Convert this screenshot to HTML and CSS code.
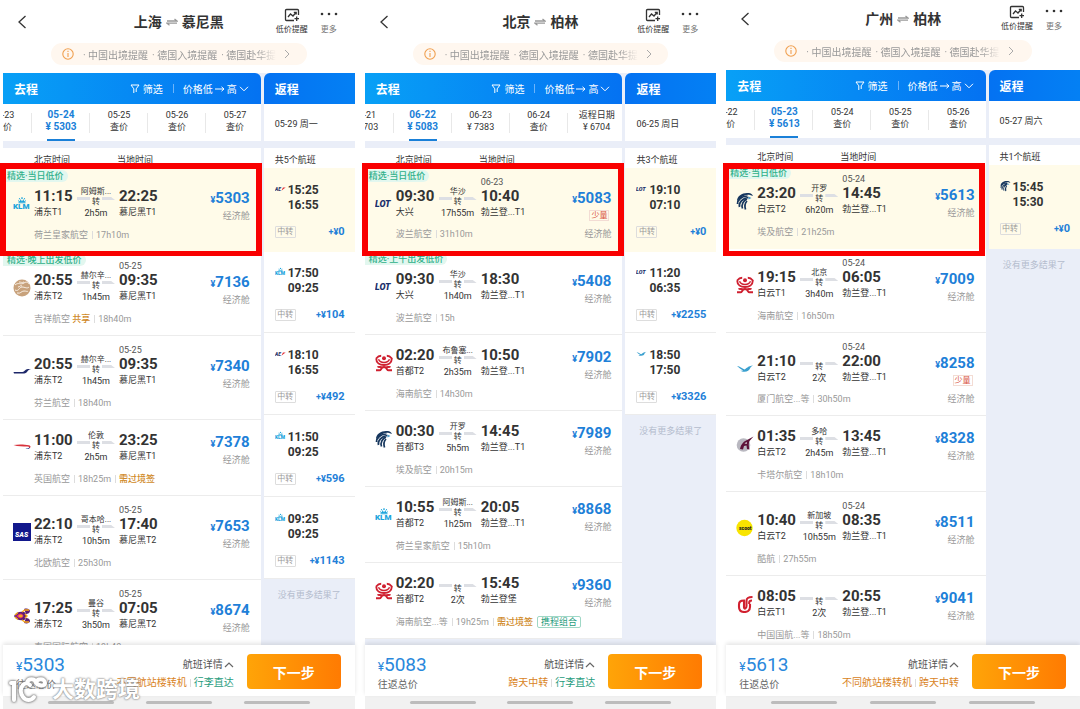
FILE: index.html
```html
<!DOCTYPE html>
<html lang="zh-CN">
<head>
	<title>航班列表</title>
	<meta charset="utf-8">
	<meta name="viewport" content="width=device-width, initial-scale=1">
	<link rel="stylesheet" href="styles.css">
</head>
<body>
<!-- shared icons and airline logos -->
<svg class="defs" aria-hidden="true">
	<symbol id="i-back" viewBox="0 0 10 14"><path d="M8.500 1 2 7l6.500 6" fill="none" stroke="#333" stroke-width="1.300"/></symbol>
	<symbol id="i-swap" viewBox="0 0 12 8"><path d="M1 3h10L8.500 1M11 5.200H1l2.500 2" fill="none" stroke="#999" stroke-width="1.300"/></symbol>
	<symbol id="i-alert" viewBox="0 0 16 14"><path d="M14.500 7V2.500a1 1 0 0 0-1-1h-11a1 1 0 0 0-1 1v9a1 1 0 0 0 1 1H10" fill="none" stroke="#333" stroke-width="1.300"/><path d="m4 9 2.500-3 2.500 2 3-3.500M9.800 4.300h2.400V6.500M12.700 8.500v4.500M10.500 10.700h4.500" fill="none" stroke="#333" stroke-width="1.300"/></symbol>
	<symbol id="i-dots" viewBox="0 0 18 4"><g fill="#333"><circle cx="2" cy="2" r="1.300"/><circle cx="9" cy="2" r="1.300"/><circle cx="16" cy="2" r="1.300"/></g></symbol>
	<symbol id="i-info" viewBox="0 0 12 12"><circle cx="6" cy="6" r="5.200" fill="none" stroke="#f0a050" stroke-width="1.100"/><path d="M6 5v4M6 2.800v1.200" stroke="#f0a050" stroke-width="1.100"/></symbol>
	<symbol id="i-right" viewBox="0 0 6 10"><path d="m1 1 4 4-4 4" fill="none" stroke="#aaa"/></symbol>
	<symbol id="i-filter" viewBox="0 0 10 10"><path d="M1 1h8L6.200 4.800V8M3.800 4.800V9M1 1l2.800 3.800" fill="none" stroke="#fff"/></symbol>
	<symbol id="i-arrow" viewBox="0 0 10 6"><path d="M0 3h9M6.500.8 9 3 6.500 5.200" fill="none" stroke="#fff"/></symbol>
	<symbol id="i-down" viewBox="0 0 10 6"><path d="m1 .8 4 4 4-4" fill="none" stroke="#fff"/></symbol>
	<symbol id="i-up" viewBox="0 0 10 6"><path d="m1 5 4-4 4 4" fill="none" stroke="#666" stroke-width="1.200"/></symbol>

	<symbol id="crown" viewBox="0 0 18 18"><g fill="#1ba4dc"><path d="M5.500 7.300h7v1h-7zM5 4.600l1.800 2 .8-2.600L9 6.400 10.400 4l.8 2.600 1.800-2-.8 2.400H5.800z"/><circle cx="9" cy="3.100" r=".9"/><circle cx="6.500" cy="3.700" r=".6"/><circle cx="11.500" cy="3.700" r=".6"/></g></symbol>
	<symbol id="juneyao" viewBox="0 0 18 18"><circle cx="9" cy="9" r="8.500" fill="#c8a27c"/><path d="M2 6c3-3 6 0 9-2s4 0 5 1M2 11c4 2 4-3 7-3s5 2 7 0M4 14c4 1 4-2 7-2s3 1 4 0M6 3c2 0 3 1 5 0M5 8c2 0 2-2 4-1" fill="none" stroke="#f8efe4" stroke-width="1"/></symbol>
	<symbol id="finnair" viewBox="0 2 18 18"><path d="M.5 11h9c2 0 2.500-3 5.500-3h3c-2.500.5-3 1.900-4 2.900-1 1-2.500 1.500-4 1.500H1z" fill="#1d2769"/></symbol>
	<symbol id="ba" viewBox="0 2 18 18"><path d="M.5 8c5-1 11-.7 15.500.2 2 .5 2.200 2.800-.5 3.300 1-1 .5-1.700-1-1.900C10 9.200 5 9.700.5 8z" fill="#d8323c"/><path d="M12.500 11.500c1.500.2 3.500-.2 4-1.500.9 1.800-2 2.700-4 1.500z" fill="#2b4a9a"/></symbol>
	<symbol id="thai" viewBox="0 0 18 18"><path d="M1 9c2-4 6-5 10-4 3 1 3 7 0 8-4 1-8 0-10-4z" fill="#5c1c74"/><path d="M11 2c3-1 6 0 6 2s-2 3-4 3zM11 16c3 1 6 0 6-2s-2-3-4-3z" fill="#5c1c74"/><path d="M3 9c2-2 4-3 6-2s2 3 0 4-4 0-6-2z" fill="#d6237a"/><path d="M6 9c1-1 3-1 3 0s-2 1-3 0zM9 5l3-2 4 0M9 13l3 2 4 0M12 7l2 2-2 2M2 8l3-2.500M2 10l3 2.500" fill="none" stroke="#f5a81c" stroke-width="1.400"/></symbol>
	<symbol id="hainan" viewBox="0 0 18 18"><g fill="none" stroke="#cf2030"><path d="M1.200 4.500c0 4.500 3.800 6.500 7.800 6.500s7.800-2 7.800-6.500c-1.500-2-3.800-2.800-5-2.800M1.200 4.500c1.500-2 3.800-2.800 5-2.800" stroke-width="1.900"/><path d="M3.500 5.300c1 2.500 3 3.200 5.500 3.200s4.500-.7 5.500-3.200" stroke-width="1.500"/><path d="M1 16.300h3.500c2 0 1.500-3.300 4.500-3.300s2.500 3.300 4.500 3.300H17M2.500 13.200c1.500-1.200 3 .8 6.500-.2 3.500 1 5-1 6.500.2" stroke-width="1.900"/></g><circle cx="9" cy="4.300" r="2" fill="#cf2030"/></symbol>
	<symbol id="egypt" viewBox="0 0 18 18"><path d="M1 9C1 4 6 1 11 1c3 0 5 .5 6 3l-3-1c-3-1-7 1-9 3z" fill="#17375e"/><g fill="none" stroke="#17375e" stroke-width="1.700"><path d="M1.500 12c0-4 4-8 10-8M3.500 15c-1-4 3-9 9-9.500M6.500 16.500c-1.500-4 1-8 4.500-9.500M9.500 17.500c-1.200-4-.5-6.500 1.500-8.500"/></g><path d="M12.500 4.500l3 1.500-3 1.500z" fill="#4a9ac8"/></symbol>
	<symbol id="xiamen" viewBox="0 1 18 18"><path d="M1 7c3 .5 5 2 7.500 3.500C11 9 12 7 17 6.500c-2 1-2.500 2-3 3-.8 1.800-2.500 3.300-5.500 3.300-2 0-3-.3-4.500-1.300 1.500.3 2.500.2 3 0C5 10 3 9 1 7z" fill="#3aa0cf"/></symbol>
	<symbol id="qatar" viewBox="0 0 18 18"><circle cx="7.500" cy="10" r="6.800" fill="#b9b8c0"/><path d="M4 14c1-5 4-8 8-9.500L17.500 1.500l-4 4.500c-1 2-1 5 0 8.500l-2.500-.5-.5-3.500-2.500.5-1 3.500z" fill="#5c1238"/><path d="M8.500 8.500l2-1.500.5 1.800z" fill="#eee"/></symbol>
	<symbol id="airchina" viewBox="0 0 18 18"><path d="M16.500 2C12 2 10.500 3 10.500 6v5c0 3-2.500 3.500-2.500 1V5.500C4 5.500 3 7 3 9.500V12c0 4 3 5 5.500 5s5.500-1 5.500-5V9M16 5.500c-2 0-2.800.5-2.800 2v1.500" fill="none" stroke="#d1202f" stroke-width="2.100"/></symbol>
</svg>

<section class="phone">
	<header class="top">
		<button class="back" aria-label="返回"><svg><use href="#i-back"/></svg></button>
		<h1>上海<svg><use href="#i-swap"/></svg>慕尼黑</h1>
		<div class="tools">
			<button class="remind"><svg><use href="#i-alert"/></svg>低价提醒</button>
			<button class="more"><svg><use href="#i-dots"/></svg>更多</button>
		</div>
	</header>
	<a class="notice" href="#"><svg class="info"><use href="#i-info"/></svg><span class="links"><span>· 中国出境提醒</span><span>· 德国入境提醒</span><span>· 德国赴华提</span></span><svg class="go"><use href="#i-right"/></svg></a>
	<main class="panels">
		<section class="out">
			<div class="bar"><h2>去程</h2><button class="filter"><svg><use href="#i-filter"/></svg>筛选</button><button class="sort">价格低<svg class="to"><use href="#i-arrow"/></svg>高<svg class="dn"><use href="#i-down"/></svg></button></div>
			<nav class="dates">
				<button>05-23<br>查价</button>
				<button class="on">05-24<br>¥ 5303</button>
				<button>05-25<br>查价</button>
				<button>05-26<br>查价</button>
				<button>05-27<br>查价</button>
			</nav>
			<div class="zones"><span>北京时间</span><span>当地时间</span></div>
			<article class="row tagged sel">
				<span class="tag">精选·当日低价</span>
				<div class="leg">
					<svg class="logo klm" viewBox="0 0 18 18"><use href="#crown"/><text x="0" y="14">KLM</text></svg>
					<div class="dep"><b>11:15</b><span>浦东T1</span></div>
					<div class="via"><span>阿姆斯...</span><i>转</i><em>2h5m</em></div>
					<div class="arr"><b>22:25</b><span>慕尼黑T1</span></div>
					<div class="price"><b><small>¥</small>5303</b><span>经济舱</span></div>
				</div>
				<p class="meta"><span>荷兰皇家航空</span><span>17h10m</span></p>
			</article>
			<article class="row dated">
				<span class="tag">精选·晚上出发低价</span>
				<div class="leg">
					<svg class="logo"><use href="#juneyao"/></svg>
					<div class="dep"><b>20:55</b><span>浦东T2</span></div>
					<div class="via"><span>赫尔辛...</span><i>转</i><em>1h45m</em></div>
					<div class="arr"><time>05-25</time><b>09:35</b><span>慕尼黑T1</span></div>
					<div class="price"><b><small>¥</small>7136</b><span>经济舱</span></div>
				</div>
				<p class="meta"><span>吉祥航空 <strong>共享</strong></span><span>18h40m</span></p>
			</article>
			<article class="row dated">
				<div class="leg">
					<svg class="logo"><use href="#finnair"/></svg>
					<div class="dep"><b>20:55</b><span>浦东T2</span></div>
					<div class="via"><span>赫尔辛...</span><i>转</i><em>1h45m</em></div>
					<div class="arr"><time>05-25</time><b>09:35</b><span>慕尼黑T1</span></div>
					<div class="price"><b><small>¥</small>7340</b><span>经济舱</span></div>
				</div>
				<p class="meta"><span>芬兰航空</span><span>18h40m</span></p>
			</article>
			<article class="row">
				<div class="leg">
					<svg class="logo"><use href="#ba"/></svg>
					<div class="dep"><b>11:00</b><span>浦东T2</span></div>
					<div class="via"><span>伦敦</span><i>转</i><em>2h5m</em></div>
					<div class="arr"><b>23:25</b><span>慕尼黑T1</span></div>
					<div class="price"><b><small>¥</small>7378</b><span>经济舱</span></div>
				</div>
				<p class="meta"><span>英国航空</span><span>18h25m</span><strong>需过境签</strong></p>
			</article>
			<article class="row dated">
				<div class="leg">
					<svg class="logo sas" viewBox="0 0 18 18"><path d="M0 0h18v18H0z"/><text x="2" y="14">SAS</text></svg>
					<div class="dep"><b>22:10</b><span>浦东T2</span></div>
					<div class="via"><span>哥本哈...</span><i>转</i><em>10h5m</em></div>
					<div class="arr"><time>05-25</time><b>17:40</b><span>慕尼黑T2</span></div>
					<div class="price"><b><small>¥</small>7653</b><span>经济舱</span></div>
				</div>
				<p class="meta"><span>北欧航空</span><span>25h30m</span></p>
			</article>
			<article class="row dated">
				<div class="leg">
					<svg class="logo"><use href="#thai"/></svg>
					<div class="dep"><b>17:25</b><span>浦东T2</span></div>
					<div class="via"><span>曼谷</span><i>转</i><em>3h50m</em></div>
					<div class="arr"><time>05-25</time><b>07:05</b><span>慕尼黑T2</span></div>
					<div class="price"><b><small>¥</small>8674</b><span>经济舱</span></div>
				</div>
				<p class="meta"><span>泰国国际航空</span><span>19h40m</span></p>
			</article>
		</section>
		<section class="ret">
			<div class="bar"><h2>返程</h2></div>
			<div class="day">05-29 周一</div>
			<div class="count">共5个航班</div>
			<div class="back-row sel"><svg class="af" viewBox="0 0 18 18"><text x="0" y="12">AE</text><path d="m10.500 12 2.500-5.500h4.500L14 9z"/></svg><p>15:25<br>16:55</p><span class="stop">中转</span><b class="add"><small>+¥</small>0</b></div>
			<div class="back-row"><svg class="klm" viewBox="0 0 18 18"><use href="#crown"/><text x="0" y="14">KLM</text></svg><p>17:50<br>09:25</p><span class="stop">中转</span><b class="add"><small>+¥</small>104</b></div>
			<div class="back-row"><svg class="af" viewBox="0 0 18 18"><text x="0" y="12">AE</text><path d="m10.500 12 2.500-5.500h4.500L14 9z"/></svg><p>18:10<br>16:55</p><span class="stop">中转</span><b class="add"><small>+¥</small>492</b></div>
			<div class="back-row"><svg class="klm" viewBox="0 0 18 18"><use href="#crown"/><text x="0" y="14">KLM</text></svg><p>11:50<br>09:25</p><span class="stop">中转</span><b class="add"><small>+¥</small>596</b></div>
			<div class="back-row"><svg class="klm" viewBox="0 0 18 18"><use href="#crown"/><text x="0" y="14">KLM</text></svg><p>09:25<br>09:25</p><span class="stop">中转</span><b class="add"><small>+¥</small>1143</b></div>
			<p class="none">没有更多结果了</p>
		</section>
	</main>
	<div class="mark"></div>
	<footer class="pay">
		<div class="total"><b><small>¥</small>5303</b><span>往返总价</span></div>
		<div class="notes"><button class="detail">航班详情<svg><use href="#i-up"/></svg></button><p><span class="warn">不同航站楼转机</span><span class="good">行李直达</span></p></div>
		<button class="next">下一步</button>
	</footer>
	<div class="sys"><i></i><i></i><i></i></div>
	<div class="watermark">
		<svg viewBox="0 0 42 28"><path d="M4 7h3v17M27 21c-3 4-8 4-11 0-3-4-3-9 0-12 2-2 5-2 7 0M20 7c1-5 8-5 9 0M29 7c1-5 9-5 9 0 0 3-5 3-8 1"/></svg>
		<span>大数跨境</span>
	</div>
</section>

<section class="phone">
	<header class="top">
		<button class="back" aria-label="返回"><svg><use href="#i-back"/></svg></button>
		<h1>北京<svg><use href="#i-swap"/></svg>柏林</h1>
		<div class="tools">
			<button class="remind"><svg><use href="#i-alert"/></svg>低价提醒</button>
			<button class="more"><svg><use href="#i-dots"/></svg>更多</button>
		</div>
	</header>
	<a class="notice" href="#"><svg class="info"><use href="#i-info"/></svg><span class="links"><span>· 中国出境提醒</span><span>· 德国入境提醒</span><span>· 德国赴华提</span></span><svg class="go"><use href="#i-right"/></svg></a>
	<main class="panels">
		<section class="out">
			<div class="bar"><h2>去程</h2><button class="filter"><svg><use href="#i-filter"/></svg>筛选</button><button class="sort">价格低<svg class="to"><use href="#i-arrow"/></svg>高<svg class="dn"><use href="#i-down"/></svg></button></div>
			<nav class="dates">
				<button>06-21<br>¥ 7703</button>
				<button class="on">06-22<br>¥ 5083</button>
				<button>06-23<br>¥ 7383</button>
				<button>06-24<br>查价</button>
				<button>返程日期<br>¥ 6704</button>
			</nav>
			<div class="zones"><span>北京时间</span><span>当地时间</span></div>
			<article class="row dated few sel">
				<span class="tag">精选·当日低价</span>
				<div class="leg">
					<svg class="logo lot" viewBox="0 0 18 18"><text x="0" y="12">LOT</text></svg>
					<div class="dep"><b>09:30</b><span>大兴</span></div>
					<div class="via"><span>华沙</span><i>转</i><em>17h55m</em></div>
					<div class="arr"><time>06-23</time><b>10:40</b><span>勃兰登...T1</span></div>
					<div class="price"><b><small>¥</small>5083</b><u>少量</u></div>
				</div>
				<p class="meta"><span>波兰航空</span><span>31h10m</span><span class="cabin">经济舱</span></p>
			</article>
			<article class="row tagged">
				<span class="tag">精选·上午出发低价</span>
				<div class="leg">
					<svg class="logo lot" viewBox="0 0 18 18"><text x="0" y="12">LOT</text></svg>
					<div class="dep"><b>09:30</b><span>大兴</span></div>
					<div class="via"><span>华沙</span><i>转</i><em>1h40m</em></div>
					<div class="arr"><b>18:30</b><span>勃兰登...T1</span></div>
					<div class="price"><b><small>¥</small>5408</b><span>经济舱</span></div>
				</div>
				<p class="meta"><span>波兰航空</span><span>15h</span></p>
			</article>
			<article class="row">
				<div class="leg">
					<svg class="logo"><use href="#hainan"/></svg>
					<div class="dep"><b>02:20</b><span>首都T2</span></div>
					<div class="via"><span>布鲁塞...</span><i>转</i><em>2h35m</em></div>
					<div class="arr"><b>10:50</b><span>勃兰登...T1</span></div>
					<div class="price"><b><small>¥</small>7902</b><span>经济舱</span></div>
				</div>
				<p class="meta"><span>海南航空</span><span>14h30m</span></p>
			</article>
			<article class="row">
				<div class="leg">
					<svg class="logo"><use href="#egypt"/></svg>
					<div class="dep"><b>00:30</b><span>首都T3</span></div>
					<div class="via"><span>开罗</span><i>转</i><em>5h5m</em></div>
					<div class="arr"><b>14:45</b><span>勃兰登...T1</span></div>
					<div class="price"><b><small>¥</small>7989</b><span>经济舱</span></div>
				</div>
				<p class="meta"><span>埃及航空</span><span>20h15m</span></p>
			</article>
			<article class="row">
				<div class="leg">
					<svg class="logo klm" viewBox="0 0 18 18"><use href="#crown"/><text x="0" y="14">KLM</text></svg>
					<div class="dep"><b>10:55</b><span>首都T2</span></div>
					<div class="via"><span>阿姆斯...</span><i>转</i><em>1h25m</em></div>
					<div class="arr"><b>20:05</b><span>勃兰登...T1</span></div>
					<div class="price"><b><small>¥</small>8868</b><span>经济舱</span></div>
				</div>
				<p class="meta"><span>荷兰皇家航空</span><span>15h10m</span></p>
			</article>
			<article class="row">
				<div class="leg">
					<svg class="logo"><use href="#hainan"/></svg>
					<div class="dep"><b>02:20</b><span>首都T2</span></div>
					<div class="via"><i>转</i><em>2次</em></div>
					<div class="arr"><b>15:45</b><span>勃兰登堡</span></div>
					<div class="price"><b><small>¥</small>9360</b><span>经济舱</span></div>
				</div>
				<p class="meta"><span>海南航空...等</span><span>19h25m</span><strong>需过境签</strong><mark>携程组合</mark></p>
			</article>
		</section>
		<section class="ret">
			<div class="bar"><h2>返程</h2></div>
			<div class="day">06-25 周日</div>
			<div class="count">共3个航班</div>
			<div class="back-row sel"><svg class="lot" viewBox="0 0 18 18"><text x="0" y="12">LOT</text></svg><p>19:10<br>07:10</p><span class="stop">中转</span><b class="add"><small>+¥</small>0</b></div>
			<div class="back-row"><svg class="lot" viewBox="0 0 18 18"><text x="0" y="12">LOT</text></svg><p>11:20<br>06:35</p><span class="stop">中转</span><b class="add"><small>+¥</small>2255</b></div>
			<div class="back-row"><svg><use href="#xiamen"/></svg><p>18:50<br>17:50</p><span class="stop">中转</span><b class="add"><small>+¥</small>3326</b></div>
			<p class="none">没有更多结果了</p>
		</section>
	</main>
	<div class="mark"></div>
	<footer class="pay">
		<div class="total"><b><small>¥</small>5083</b><span>往返总价</span></div>
		<div class="notes"><button class="detail">航班详情<svg><use href="#i-up"/></svg></button><p><span class="warn">跨天中转</span><span class="good">行李直达</span></p></div>
		<button class="next">下一步</button>
	</footer>
	<div class="sys"><i></i><i></i><i></i></div>
</section>

<section class="phone">
	<header class="top">
		<button class="back" aria-label="返回"><svg><use href="#i-back"/></svg></button>
		<h1>广州<svg><use href="#i-swap"/></svg>柏林</h1>
		<div class="tools">
			<button class="remind"><svg><use href="#i-alert"/></svg>低价提醒</button>
			<button class="more"><svg><use href="#i-dots"/></svg>更多</button>
		</div>
	</header>
	<a class="notice" href="#"><svg class="info"><use href="#i-info"/></svg><span class="links"><span>· 中国出境提醒</span><span>· 德国入境提醒</span><span>· 德国赴华提</span></span><svg class="go"><use href="#i-right"/></svg></a>
	<main class="panels">
		<section class="out">
			<div class="bar"><h2>去程</h2><button class="filter"><svg><use href="#i-filter"/></svg>筛选</button><button class="sort">价格低<svg class="to"><use href="#i-arrow"/></svg>高<svg class="dn"><use href="#i-down"/></svg></button></div>
			<nav class="dates">
				<button>05-22<br>查价</button>
				<button class="on">05-23<br>¥ 5613</button>
				<button>05-24<br>查价</button>
				<button>05-25<br>查价</button>
				<button>05-26<br>查价</button>
			</nav>
			<div class="zones"><span>北京时间</span><span>当地时间</span></div>
			<article class="row dated sel">
				<span class="tag">精选·当日低价</span>
				<div class="leg">
					<svg class="logo"><use href="#egypt"/></svg>
					<div class="dep"><b>23:20</b><span>白云T2</span></div>
					<div class="via"><span>开罗</span><i>转</i><em>6h20m</em></div>
					<div class="arr"><time>05-24</time><b>14:45</b><span>勃兰登...T1</span></div>
					<div class="price"><b><small>¥</small>5613</b><span>经济舱</span></div>
				</div>
				<p class="meta"><span>埃及航空</span><span>21h25m</span></p>
			</article>
			<article class="row dated">
				<div class="leg">
					<svg class="logo"><use href="#hainan"/></svg>
					<div class="dep"><b>19:15</b><span>白云T1</span></div>
					<div class="via"><span>北京</span><i>转</i><em>3h40m</em></div>
					<div class="arr"><time>05-24</time><b>06:05</b><span>勃兰登...T1</span></div>
					<div class="price"><b><small>¥</small>7009</b><span>经济舱</span></div>
				</div>
				<p class="meta"><span>海南航空</span><span>16h50m</span></p>
			</article>
			<article class="row dated few">
				<div class="leg">
					<svg class="logo"><use href="#xiamen"/></svg>
					<div class="dep"><b>21:10</b><span>白云T2</span></div>
					<div class="via"><i>转</i><em>2次</em></div>
					<div class="arr"><time>05-24</time><b>22:00</b><span>勃兰登...T1</span></div>
					<div class="price"><b><small>¥</small>8258</b><u>少量</u></div>
				</div>
				<p class="meta"><span>厦门航空...等</span><span>30h50m</span><span class="cabin">经济舱</span></p>
			</article>
			<article class="row">
				<div class="leg">
					<svg class="logo"><use href="#qatar"/></svg>
					<div class="dep"><b>01:35</b><span>白云T2</span></div>
					<div class="via"><span>多哈</span><i>转</i><em>2h45m</em></div>
					<div class="arr"><b>13:45</b><span>勃兰登...T1</span></div>
					<div class="price"><b><small>¥</small>8328</b><span>经济舱</span></div>
				</div>
				<p class="meta"><span>卡塔尔航空</span><span>18h10m</span></p>
			</article>
			<article class="row dated">
				<div class="leg">
					<svg class="logo scoot" viewBox="0 0 18 18"><circle cx="8.500" cy="9" r="8.200"/><text x="3" y="11">scoot</text></svg>
					<div class="dep"><b>10:40</b><span>白云T2</span></div>
					<div class="via"><span>新加坡</span><i>转</i><em>10h55m</em></div>
					<div class="arr"><time>05-24</time><b>08:35</b><span>勃兰登...T1</span></div>
					<div class="price"><b><small>¥</small>8511</b><span>经济舱</span></div>
				</div>
				<p class="meta"><span>酷航</span><span>27h55m</span></p>
			</article>
			<article class="row">
				<div class="leg">
					<svg class="logo"><use href="#airchina"/></svg>
					<div class="dep"><b>08:05</b><span>白云T1</span></div>
					<div class="via"><i>转</i><em>2次</em></div>
					<div class="arr"><b>20:55</b><span>勃兰登...T1</span></div>
					<div class="price"><b><small>¥</small>9041</b><span>经济舱</span></div>
				</div>
				<p class="meta"><span>中国国航...等</span><span>18h50m</span></p>
			</article>
		</section>
		<section class="ret">
			<div class="bar"><h2>返程</h2></div>
			<div class="day">05-27 周六</div>
			<div class="count">共1个航班</div>
			<div class="back-row sel"><svg><use href="#egypt"/></svg><p>15:45<br>15:30</p><span class="stop">中转</span><b class="add"><small>+¥</small>0</b></div>
			<p class="none">没有更多结果了</p>
		</section>
	</main>
	<div class="mark"></div>
	<footer class="pay">
		<div class="total"><b><small>¥</small>5613</b><span>往返总价</span></div>
		<div class="notes"><button class="detail">航班详情<svg><use href="#i-up"/></svg></button><p><span class="warn">不同航站楼转机</span><span class="warn">跨天中转</span></p></div>
		<button class="next">下一步</button>
	</footer>
	<div class="sys"><i></i><i></i><i></i></div>
</section>
</body>
</html>
```
FILE: styles.css
```css
* {
	box-sizing: border-box;
}
body {
	margin: 0;
	padding-left: 3px;
	display: grid;
	grid-template-columns: repeat(3, 1fr);
	gap: 8px;
	height: 100vh;
	background: #fff;
	color: #333;
	font-family: Roboto, "Noto Sans CJK SC", sans-serif;
	font-size: 9px;
	overflow: hidden;
}
h1, h2, p {
	margin: 0;
}
button {
	border: 0;
	padding: 0;
	background: none;
	color: inherit;
	font: inherit;
	cursor: pointer;
}
i, em {
	font-style: normal;
}
u {
	text-decoration: none;
}
svg {
	display: block;
	flex: none;
}
.defs {
	position: absolute;
	width: 0;
	height: 0;
}
.phone {
	position: relative;
	display: flex;
	flex-direction: column;
	min-width: 0;
	height: 100vh;
	padding-right: 2px;
}
.phone:last-child {
	padding-right: 0;
}

/* title bar */
.top {
	display: grid;
	grid-template-columns: 1fr auto 1fr;
	align-items: center;
	height: 43px;
	padding: 3px 14px;
	flex: none;
}
.phone:last-child .top {
	height: 40px;
	padding-top: 0;
}
.back svg {
	width: 10px;
	height: 14px;
}
.top h1 {
	display: flex;
	align-items: center;
	gap: 4px;
	font-size: 14px;
	line-height: 20px;
	font-weight: 700;
}
.top h1 svg {
	width: 12px;
	height: 8px;
}
.tools {
	display: flex;
	justify-content: flex-end;
	gap: 12px;
	padding-right: 3px;
	font-size: 8px;
	line-height: 12px;
}
.tools button {
	display: flex;
	flex-direction: column;
	align-items: center;
	justify-content: space-between;
	gap: 2px;
}
.remind svg {
	width: 16px;
	height: 14px;
}
.more {
	color: #777;
}
.more svg {
	width: 18px;
	height: 4px;
	margin-top: 4px;
}
.notice {
	display: flex;
	align-items: center;
	height: 22px;
	margin: 0 48px 8px;
	padding: 0 14px 0 11px;
	border-radius: 11px;
	background: #fff7ef;
	color: #999;
	font-size: 10px;
	text-decoration: none;
	flex: none;
}
.notice .info {
	width: 12px;
	height: 12px;
}
.notice .go {
	width: 6px;
	height: 10px;
	margin-left: 8px;
}
.links {
	display: flex;
	gap: 4px;
	margin-left: 9px;
	white-space: nowrap;
	-webkit-mask-image: linear-gradient(90deg, #000 90%, transparent);
	mask-image: linear-gradient(90deg, #000 90%, transparent);
}

/* two columns */
.panels {
	display: grid;
	grid-template-columns: 258fr 91fr;
	gap: 3px;
	flex: 1;
	min-height: 0;
	overflow: hidden;
	background: #eaeef8;
}
.out, .ret {
	min-width: 0;
}
.bar {
	display: flex;
	align-items: center;
	height: 31px;
	padding: 0 12px 0 11px;
	color: #fff;
	font-size: 10px;
}
.out .bar {
	border-radius: 0 6px 0 0;
	background: linear-gradient(90deg, #08a0f6, #0472f2);
}
.ret .bar {
	border-radius: 6px 0 0 0;
	background: linear-gradient(90deg, #0472f2, #0480f4);
}
.bar h2 {
	font-size: 12px;
	font-weight: 700;
}
.bar button {
	display: flex;
	align-items: center;
}
.filter {
	margin-left: auto;
	gap: 3px;
}
.filter svg {
	width: 10px;
	height: 10px;
}
.bar .sort {
	margin-left: 10px;
	padding-left: 10px;
	background: linear-gradient(#6db4fa, #6db4fa) left center / 1px 9px no-repeat;
}
.sort .to {
	width: 10px;
	height: 6px;
	margin: 0 2px;
}
.sort .dn {
	width: 10px;
	height: 6px;
	margin-left: 2px;
}
.dates {
	display: flex;
	height: 37px;
	overflow: hidden;
	background: #fff;
}
.dates button {
	position: relative;
	flex: 0 0 58px;
	line-height: 12px;
	padding-bottom: 3px;
	background: linear-gradient(#e8e8e8, #e8e8e8) right center / 1px 20px no-repeat;
}
.dates button:first-child {
	margin-left: -29px;
}
.dates .on {
	color: #1a80d8;
	font-size: 10px;
	font-weight: 700;
}
.dates .on::after {
	content: "";
	position: absolute;
	left: 15px;
	right: 15px;
	bottom: 0;
	height: 2px;
	background: #1a80d8;
}
.zones, .count {
	height: 20px;
	margin-top: 7px;
	padding-top: 5px;
	line-height: 14px;
	background: #fff;
}
.zones {
	display: flex;
	padding-left: 31px;
	gap: 47px;
}
.day {
	height: 37px;
	padding: 3px 0 0 11px;
	line-height: 34px;
	background: #fff;
}
.count {
	padding-left: 11px;
}

/* flight rows */
.row {
	position: relative;
	padding: 11px 11px 10px 10px;
	border-bottom: 1px solid #ececec;
	background: #fff;
}
.row.tagged {
	padding-top: 19px;
}
.row.dated {
	padding-top: 9px;
}
.row.sel, .back-row.sel {
	background: #fffbe9;
	border-color: #fffbe9;
}
.tag {
	position: absolute;
	left: 0;
	top: 2px;
	height: 12px;
	padding: 0 4px;
	border-radius: 0 6px 6px 0;
	background: #e2f7ef;
	color: #2fb08a;
	line-height: 12px;
	font-weight: 500;
}
.leg {
	display: flex;
	align-items: flex-end;
}
.leg b, .leg span, .leg time, .leg i, .leg em {
	display: block;
	white-space: nowrap;
}
.leg b {
	font-size: 15px;
	line-height: 18px;
	font-weight: 700;
}
.leg span {
	line-height: 15px;
}
.logo {
	width: 18px;
	height: 18px;
	margin: 0 3px 7px 0;
}
svg text {
	font-weight: 900;
}
.klm text {
	fill: #1ba4dc;
	font-size: 8px;
}
.lot text {
	fill: #1a2f6b;
	font-size: 9px;
	font-style: italic;
}
.sas {
	fill: #12188c;
}
.sas text {
	fill: #fff;
	font-size: 7px;
	font-style: italic;
}
.scoot {
	fill: #f8e400;
}
.scoot text {
	fill: #222;
	font-size: 5px;
}
.af {
	fill: #e0303a;
}
.af text {
	fill: #2a3466;
	font-size: 8px;
	font-style: italic;
}
.dep {
	width: 39px;
}
.via {
	width: 46px;
	padding: 0 4px;
	text-align: center;
}
.via span {
	margin: 0 -4px;
	font-size: 8px;
	line-height: 10px;
}
.leg .via i {
	display: flex;
	justify-content: space-between;
	font-size: 8px;
	line-height: 9px;
}
.via i::before, .via i::after {
	content: "";
	width: 13px;
	height: 3px;
	background: #dddfe4;
}
.via i::after {
	clip-path: polygon(0 0, 70% 0, 100% 100%, 0 100%);
}
.via em {
	margin: 0 -4px;
	line-height: 14px;
}
.arr time {
	line-height: 10px;
	color: #555;
}
.price {
	margin: 0 0 -4px auto;
	text-align: right;
}
.price b {
	color: #1e80d8;
}
.price small {
	font-size: 9px;
}
.price span, .meta {
	color: #999;
}
.price u {
	display: block;
	width: 20px;
	margin: 1px 2px 3px auto;
	border: 1px solid #f3dcd4;
	color: #d8503c;
	font-size: 8px;
	line-height: 9px;
	text-align: center;
}
.meta {
	display: flex;
	height: 12px;
	margin-top: 9px;
	padding-left: 21px;
	line-height: 12px;
	white-space: nowrap;
}
.few .meta {
	margin-top: 8px;
}
.meta > * + * {
	margin-left: 4px;
	padding-left: 4px;
	background: linear-gradient(#ddd, #ddd) left center / 1px 8px no-repeat;
}
.meta strong {
	color: #d08a28;
	font-weight: 500;
}
.meta .cabin {
	margin-left: auto;
	background: none;
}
.meta mark {
	padding: 0 3px;
	border: 1px solid #9fd8c6;
	border-radius: 2px;
	background: none;
	color: #1f9c7c;
	line-height: 11px;
}

/* return flights */
.back-row {
	display: grid;
	grid-template-columns: 10px 1fr auto;
	column-gap: 3px;
	padding: 15px 10px 11px 11px;
	border-bottom: 1px solid #ececec;
	background: #fff;
}
.back-row.sel {
	padding-bottom: 13px;
}
.back-row.sel + .back-row {
	padding-top: 14px;
}
.back-row svg {
	width: 11px;
	height: 12px;
}
.back-row p {
	grid-column: 2 / 4;
	font-size: 12px;
	line-height: 15px;
	font-weight: 700;
}
.stop {
	grid-column: 1 / 3;
	width: 21px;
	height: 12px;
	margin-top: 13px;
	border: 1px solid #ddd;
	border-radius: 1px;
	color: #999;
	font-size: 8px;
	line-height: 10px;
	text-align: center;
}
.add {
	margin-top: 13px;
	color: #1e80d8;
	font-size: 11px;
	line-height: 12px;
}
.add small {
	font-size: 9px;
}
.none {
	padding-top: 9px;
	color: #b4bccd;
	line-height: 14px;
	text-align: center;
}

/* highlight frame over the cheapest flight */
.mark {
	position: absolute;
	top: 163px;
	left: -3px;
	width: 262px;
	height: 93px;
	border: 6px solid #f90000;
	border-bottom-width: 5px;
}

/* bottom */
.pay {
	position: relative;
	display: flex;
	align-items: center;
	height: 51px;
	padding: 2px 14px 0 13px;
	background: #fff;
	box-shadow: 0 -2px 4px rgba(0,0,0,0.1);
	font-size: 10px;
	flex: none;
}
.total {
	padding-top: 2px;
}
.total b {
	display: block;
	color: #2a88dc;
	font-size: 19px;
	line-height: 22px;
	font-weight: 400;
}
.total small {
	font-size: 12px;
}
.total span {
	display: block;
	color: #666;
	line-height: 14px;
}
.notes {
	margin-left: auto;
	margin-right: 13px;
	padding-top: 4px;
	text-align: right;
	line-height: 18px;
}
.detail {
	display: inline-flex;
	align-items: center;
	gap: 1px;
	color: #555;
}
.detail svg {
	width: 10px;
	height: 6px;
}
.notes p {
	display: flex;
	justify-content: flex-end;
}
.notes p span + span {
	margin-left: 3px;
	padding-left: 4px;
	background: linear-gradient(#ddd, #ddd) left center / 1px 8px no-repeat;
}
.warn {
	color: #d98324;
}
.good {
	color: #1f9c7c;
}
.next {
	width: 94px;
	height: 35px;
	border-radius: 4px;
	background: linear-gradient(90deg, #ffa408, #ff7b02);
	color: #fff;
	font-size: 14px;
	font-weight: 700;
}
.sys {
	display: flex;
	align-items: center;
	justify-content: space-between;
	height: 13px;
	padding: 0 45px;
	background: #f1f1f1;
	flex: none;
}
.sys i {
	width: 66px;
	height: 3px;
	border-radius: 2px;
	background: #bcbcbc;
}
.watermark {
	position: absolute;
	left: 4px;
	bottom: 4px;
	display: flex;
	align-items: center;
	gap: 3px;
	color: #fff;
	font-size: 22px;
	line-height: 30px;
	font-weight: 700;
	text-shadow: 0 0 2px #777, 0 0 2px #999;
}
.watermark svg {
	width: 42px;
	height: 28px;
	fill: none;
	stroke: #fff;
	stroke-width: 4;
	stroke-linecap: round;
	filter: drop-shadow(0 0 1px #777) drop-shadow(0 0 1px #999);
}
```
